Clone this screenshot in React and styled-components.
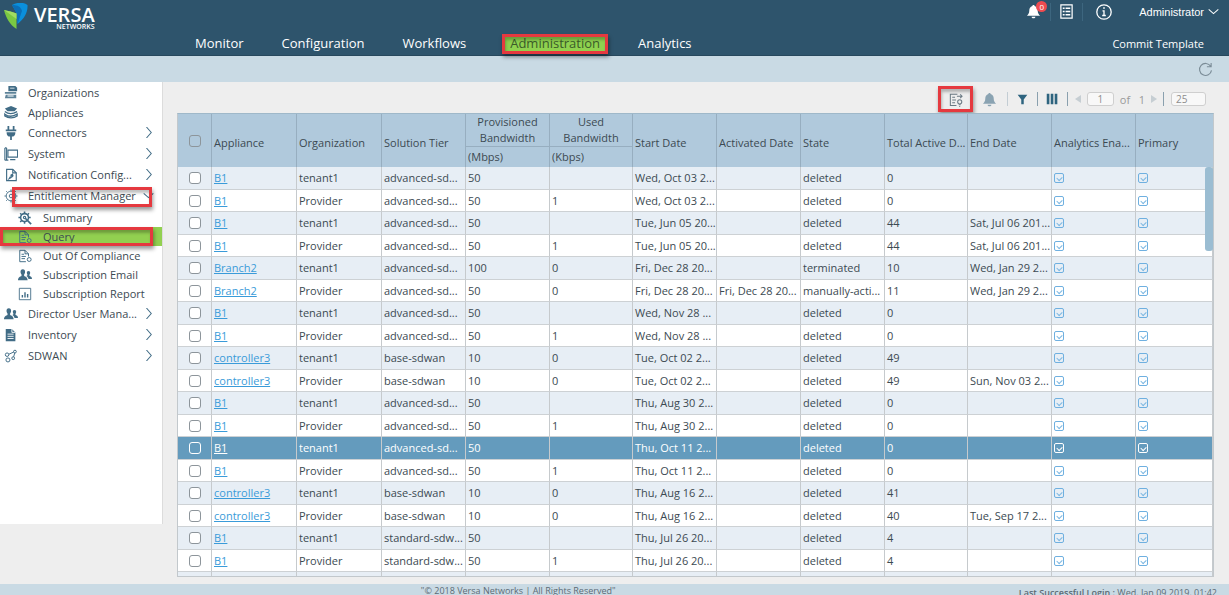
import React, { useState } from 'react'
import styled, { createGlobalStyle, css } from 'styled-components'

const GlobalStyle = createGlobalStyle`
  * {
    box-sizing: border-box;
  }
  body {
    margin: 0;
    font-family: 'Open Sans', 'Noto Sans', sans-serif;
    font-size: 11px;
    color: #3c4a52;
    background: #eeeeee;
  }
  button, input {
    font: inherit;
    color: inherit;
    margin: 0;
  }
  a {
    color: inherit;
    text-decoration: none;
  }
`

// red marker drawn round the parts the guide points at
const marker = css`
  position: relative;
  &::after {
    content: '';
    position: absolute;
    inset: ${(p) => p.$markInset || '0'};
    border: 3px solid #e5393f;
    box-shadow: 1px 3px 4px rgba(0, 0, 0, 0.4), inset 1px 3px 3px rgba(0, 0, 0, 0.25);
    pointer-events: none;
  }
`

const Page = styled.div`
  display: flex;
  flex-direction: column;
  height: 100vh;
  overflow: hidden;
`

const Header = styled.header`
  display: grid;
  grid-template-columns: 175px 1fr auto;
  height: 56px;
  flex: none;
  background: #2e546c;
  border-bottom: 1px solid #27485d;
  color: #ffffff;
`

const Logo = styled.a`
  display: flex;
  align-items: flex-start;
  gap: 6px;
  padding: 3px 0 0 4px;
`

const LogoText = styled.span`
  display: flex;
  flex-direction: column;
  align-items: flex-end;
  padding-top: 3px;
`

const LogoName = styled.span`
  font-size: 20px;
  line-height: 18px;
  font-weight: 600;
`

const LogoSub = styled.span`
  font-size: 7px;
  line-height: 6px;
  font-weight: 600;
`

const Nav = styled.nav`
  display: flex;
  align-items: flex-end;
  padding: 0 0 1px 1px;
`

const NavLink = styled.a`
  margin: 0 12px 2px;
  padding: 0 7px;
  font-size: 13px;
  line-height: 18px;
  ${(p) =>
    p.$active &&
    css`
      color: #3b5b2a;
      background: #8fd14f;
      border-radius: 4px;
      margin-left: 18px;
      ${marker}
    `}
`

const HeaderRight = styled.div`
  display: flex;
  flex-direction: column;
  justify-content: space-between;
  align-items: flex-end;
  padding: 0 10px 1px 0;
`

const HeaderIcons = styled.div`
  display: flex;
  align-items: center;
  height: 23px;
`

const HeaderButton = styled.button`
  position: relative;
  display: flex;
  align-items: center;
  justify-content: center;
  width: ${(p) => p.$width || '32px'};
  height: 18px;
  padding: 0;
  border: 0;
  border-right: ${(p) => (p.$divider ? '1px solid #3d667f' : '0')};
  background: none;
`

const Badge = styled.span`
  position: absolute;
  top: -2px;
  right: 3px;
  width: 11px;
  height: 11px;
  border-radius: 50%;
  background: #ee4b50;
  font-size: 8px;
  line-height: 11px;
  text-align: center;
`

const UserButton = styled.button`
  display: flex;
  align-items: center;
  gap: 4px;
  padding: 0 0 0 14px;
  border: 0;
  background: none;
  font-family: 'Liberation Sans', Arial, sans-serif;
  font-size: 11px;
`

const Commit = styled.a`
  padding: 0 15px 0 0;
  font-size: 11px;
  line-height: 20px;
`

const SubBar = styled.div`
  display: flex;
  align-items: center;
  justify-content: flex-end;
  flex: none;
  height: 26px;
  padding-right: 16px;
  background: #c9dae4;
  color: #7b8c97;
`

const IconButton = styled.button`
  display: flex;
  align-items: center;
  justify-content: center;
  width: ${(p) => p.$width || '29px'};
  height: 20px;
  padding: 0;
  border: 0;
  background: none;
  color: ${(p) => p.$color || 'inherit'};
  ${(p) => p.$marked && marker}
`

const Body = styled.div`
  display: flex;
  flex: 1;
  min-height: 0;
`

const Sidebar = styled.nav`
  width: 163px;
  flex: none;
  margin-bottom: 60px;
  background: #ffffff;
  border-right: 1px solid #dcdcdc;
`

const List = styled.ul`
  list-style: none;
  margin: 0;
  padding: ${(p) => (p.$sub ? '2px 0 0' : '0')};
`

const SideLink = styled.a`
  display: grid;
  grid-template-columns: ${(p) => (p.$sub ? '25px 1fr' : '24px 1fr 11px')};
  align-items: center;
  height: ${(p) => (p.$sub ? '19px' : p.$branch ? '21px' : '20px')};
  padding: 0 8px 0 ${(p) => (p.$sub ? '18px' : '4px')};
  font-size: 11px;
  white-space: nowrap;
  background: ${(p) => (p.$active ? '#92d050' : 'none')};
  ${(p) => p.$markInset && marker}
  svg {
    color: #416c86;
  }
`

const Main = styled.main`
  display: flex;
  flex-direction: column;
  flex: 1;
  min-width: 0;
  padding: 0 15px 7px 14px;
`

const Toolbar = styled.div`
  display: flex;
  align-items: center;
  justify-content: flex-end;
  flex: none;
  height: 31px;
  padding: 3px 2px 0 0;
  color: #9a9a9a;
`

const Divider = styled.span`
  width: 1px;
  height: 14px;
  background: ${(p) => (p.$dark ? '#8aa0ae' : '#c3cdd4')};
`

const Pager = styled.div`
  display: flex;
  align-items: center;
  gap: 6px;
  padding: 0 6px 0 7px;
`

const PagerButton = styled.button`
  display: flex;
  padding: 0;
  border: 0;
  background: none;
  color: #c6ced3;
`

const SmallInput = styled.input`
  width: ${(p) => p.$width};
  height: 14px;
  padding: 0 4px;
  border: 1px solid #cfcfcf;
  border-radius: 3px;
  background: #f8f8f8;
  font-size: 10px;
  color: #8d8d8d;
  text-align: ${(p) => p.$align || 'left'};
`

const TableWrap = styled.div`
  position: relative;
  flex: 1;
  min-height: 0;
  overflow: hidden;
  border: 1px solid #c2c8cc;
  border-top-color: #9fb8c9;
`

const Table = styled.table`
  width: 100%;
  table-layout: fixed;
  border-collapse: separate;
  border-spacing: 0;
`

const Th = styled.th`
  height: ${(p) => p.$height || '53px'};
  padding: ${(p) => (p.$center ? '0' : '4px 0 0 2px')};
  overflow: hidden;
  white-space: nowrap;
  font-weight: 400;
  line-height: 16px;
  text-align: ${(p) => (p.$center ? 'center' : 'left')};
  background: #b0c9dc;
  border-right: 1px solid #97aec0;
  border-bottom: ${(p) => (p.$line ? '1px solid #97aec0' : '0')};
  &:last-child {
    border-right-color: #b0c9dc;
  }
`

const UnitTh = styled(Th)`
  padding: 0 0 0 2px;
  &:last-child {
    border-right-color: #97aec0;
  }
`

const Td = styled.td`
  padding: ${(p) => (p.$center ? '0' : '0 0 0 2px')};
  overflow: hidden;
  white-space: nowrap;
  line-height: 16px;
  text-align: ${(p) => (p.$center ? 'center' : 'left')};
  border-right: 1px solid #c6cacd;
  border-bottom: 1px solid #cdd1d4;
`

const Row = styled.tr`
  height: 22px;
  background: #ffffff;
  &:nth-child(odd) {
    height: 23px;
    background: #e7eef5;
  }
  &&:nth-child(n) {
    ${(p) => p.$selected && 'background: #649bbd; color: #ffffff;'}
  }
`

const RowLink = styled.a`
  color: ${(p) => (p.$selected ? '#ffffff' : '#3a9bd9')};
  text-decoration: underline;
`

const Check = styled.input`
  appearance: none;
  display: block;
  width: 12px;
  height: 12px;
  margin: 0 auto;
  border: 1px solid ${(p) => (p.$light ? '#ffffff' : '#8d959b')};
  border-radius: 3px;
  background: ${(p) => (p.$light || p.$clear ? 'transparent' : '#ffffff')};
  &:checked {
    background: #649bbd;
  }
`

const Flag = styled.input`
  appearance: none;
  display: block;
  width: 10px;
  height: 10px;
  border: 1px solid ${(p) => (p.$light ? '#ffffff' : '#6fb0e0')};
  border-radius: 2px;
  &::before {
    content: '';
    display: block;
    width: 4px;
    height: 3px;
    margin: 2px 0 0 2px;
    border: solid ${(p) => (p.$light ? '#ffffff' : '#7db8e2')};
    border-width: 0 0 1px 1px;
    transform: rotate(-45deg);
  }
`

const ScrollThumb = styled.div`
  position: absolute;
  top: 53px;
  right: 0;
  width: 8px;
  height: 84px;
  border-radius: 3px;
  background: #9bbdd2;
`

const Footer = styled.footer`
  display: flex;
  justify-content: space-between;
  flex: none;
  height: 11px;
  padding: 0 12px 0 34%;
  overflow: hidden;
  background: #c9dae4;
  font-size: 9px;
  line-height: 13px;
  color: #5c6b75;
`

const Copyright = styled.span`
  padding-left: 3px;
`

const LastLogin = styled.span`
  padding-top: 2px;
  b {
    font-weight: 600;
  }
`

const Svg = ({ size = 14, box = 16, children, ...rest }) => (
  <svg
    width={size}
    height={size}
    viewBox={`0 0 ${box} ${box}`}
    fill="none"
    stroke="currentColor"
    strokeWidth="1.3"
    aria-hidden="true"
    {...rest}
  >
    {children}
  </svg>
)

const solid = { fill: 'currentColor', stroke: 'none' }

const icons = {
  organizations: (
    <g {...solid}>
      <path d="M5 1h8l2 2v4H5z" />
      <path d="M1 8h13v2H1zM2 11h12v4H1z" opacity="0.85" />
      <path d="M7 3h5v1H7zM4 12h7v1H4z" fill="#fff" />
    </g>
  ),
  appliances: (
    <g>
      <path d="M1 4l7-3 7 3-3 3H4z" {...solid} />
      <path d="M1 7.500c4 3 9 3 14 0M1 10.500c4 3 9 3 14 0v2c-4 3-10 3-14 0z" strokeWidth="1.600" />
    </g>
  ),
  connectors: (
    <g {...solid}>
      <path d="M4 0h2v4H4zM10 0h2v4h-2zM2 4h12v2H2zM3 7h10c0 4-2 5-4 5v4H7v-4c-2 0-4-1-4-5z" />
    </g>
  ),
  system: (
    <g>
      <path d="M4.500 3.500h11v8h-11z" />
      <path d="M1 1v14M3 1v14M1 1h2M1 15h4M7 14.500h6" />
    </g>
  ),
  notification: (
    <g>
      <path d="M3 1.500h7l4 4v9H3z" />
      <path d="M4 14l3-5 2 2zM7 8l3-2 1 3-2 2z" {...solid} />
      <path d="M10 1.500v4h4" />
    </g>
  ),
  gear: (
    <g strokeWidth="1">
      <circle cx="8" cy="8" r="5.500" />
      <circle cx="8" cy="8" r="2" />
      <path d="M8 .5v2M8 13.500v2M.5 8h2M13.500 8h2M2.500 2.500l1.500 1.500M12 12l1.500 1.500M2.500 13.500l1.500-1.500M12 4l1.500-1.500" />
    </g>
  ),
  summary: (
    <g>
      <circle cx="7.500" cy="7.500" r="4.500" strokeWidth="1.800" />
      <path d="M7.500 .5v2.500M.5 7.500H3M2.500 2.500l2 2M2.500 12.500l2-2M10.500 4.500l2-2M7.500 14.500v-2.500M12 7.500h2.500" strokeWidth="1.800" />
      <path d="M8 8l7 7" strokeWidth="2" />
      <circle cx="7.500" cy="7.500" r="1.300" />
    </g>
  ),
  query: (
    <g strokeWidth="1.100">
      <path d="M9 14.500H2v-13h6l4 4v3M8 1.500v4h4M4 6h3M4 8.500h5M4 11h4" />
      <circle cx="12.800" cy="12" r="2.200" />
    </g>
  ),
  users: (
    <g {...solid}>
      <path d="M5.500 1.500c1.900 0 2.700 1.400 2.600 3.200C8 6.200 7.400 7 7 7.500V9c1.500.8 4 1.200 4 5H0c0-3.800 2.500-4.200 4-5V7.500C3.600 7 3 6.200 2.900 4.700 2.800 2.900 3.600 1.500 5.500 1.500z" />
      <path d="M12 3.500c1.400 0 2 1 1.900 2.300-.1 1.100-.5 1.700-.8 2v1c1 .6 2.900.9 2.900 3.700h-4c-.3-1.700-1.200-2.800-2.500-3.500 1-.2 1.400-.6 1.400-1.200-.3-.3-.7-.9-.8-2C10 4.500 10.600 3.500 12 3.500z" />
    </g>
  ),
  report: (
    <g>
      <path d="M1.500 1.500h13v13h-13z" strokeWidth="1" />
      <path d="M5 12V9M8 12V6M11 12V8" strokeWidth="1.600" />
    </g>
  ),
  inventory: (
    <g>
      <path d="M2 1h7l4 4v10H2z" {...solid} />
      <path d="M4 7h7M4 9.500h7M4 12h7" stroke="#fff" strokeWidth="1" />
      <path d="M9 1v4h4" stroke="#fff" strokeWidth="1" />
    </g>
  ),
  sdwan: (
    <g strokeWidth="1.100">
      <circle cx="3.500" cy="6.500" r="2" />
      <circle cx="4.500" cy="12.500" r="2.300" />
      <circle cx="10.500" cy="10.500" r="1.600" />
      <circle cx="12.500" cy="3" r="1.600" />
      <path d="M5.500 6l5.500-2.500M11 9l1.300-4.500" />
    </g>
  ),
  bell: (
    <path
      d="M8 1c.8 0 1.200.5 1.200 1.200C11.500 2.800 12.500 5 12.500 7c0 3 1 4 2.500 5.500H1C2.500 11 3.500 10 3.500 7c0-2 1-4.200 3.300-4.800C6.800 1.500 7.200 1 8 1zM6 13.500h4c0 1-.9 1.800-2 1.800s-2-.8-2-1.800z"
      {...solid}
    />
  ),
  tasks: (
    <g>
      <path d="M2 1h12v14H2z" />
      <path d="M4 4.500h2M7 4.500h5M4 8h2M7 8h5M4 11.500h2M7 11.500h5" strokeWidth="1.500" />
    </g>
  ),
  info: (
    <g>
      <circle cx="8" cy="8" r="7.200" />
      <path d="M6.500 6.800H8V11.500M6.200 11.500h3.600" />
      <path d="M7.200 4h1.600" strokeWidth="1.600" />
    </g>
  ),
  export: (
    <g strokeWidth="1.100">
      <path d="M9 14.500H2.500v-12H10M4.500 5.500h3M4.500 8.500h4M4.500 11.500h3" />
      <path d="M9.500 4.500h5M13 2.500l2 2-2 2" />
      <circle cx="12.500" cy="10.500" r="2.200" />
      <path d="M11.500 13.500h2M12 15.500h1" />
    </g>
  ),
  filter: <path d="M1 1h14L9.800 8v7H6.200V8z" {...solid} />,
  columns: <path d="M1 1h3.500v14H1zM6.300 1h3.500v14H6.300zM11.600 1h3.500v14h-3.500z" {...solid} />,
  refresh: <path d="M13.500 4.500A6.400 6.400 0 1 0 14.400 9M14 1v4h-4.500" strokeWidth="1.200" />,
  right: <path d="M5 0l7 8-7 8" strokeWidth="1.500" />,
  down: <path d="M1 5l7 6 7-6" strokeWidth="1.500" />,
}

const menu = [
  { label: 'Organizations', icon: 'organizations' },
  { label: 'Appliances', icon: 'appliances' },
  { label: 'Connectors', icon: 'connectors', branch: true },
  { label: 'System', icon: 'system', branch: true },
  { label: 'Notification Config...', icon: 'notification', branch: true },
  {
    label: 'Entitlement Manager',
    icon: 'gear',
    branch: true,
    mark: '2px 10px -1px 12px',
    children: [
      { label: 'Summary', icon: 'summary' },
      { label: 'Query', icon: 'query', active: true, mark: '0 9px 0 0' },
      { label: 'Out Of Compliance', icon: 'query' },
      { label: 'Subscription Email', icon: 'users' },
      { label: 'Subscription Report', icon: 'report' },
    ],
  },
  { label: 'Director User Mana...', icon: 'users', branch: true },
  { label: 'Inventory', icon: 'inventory', branch: true },
  { label: 'SDWAN', icon: 'sdwan', branch: true },
]

const navItems = ['Monitor', 'Configuration', 'Workflows', 'Administration', 'Analytics']

const adv = 'advanced-sd...'
const base = 'base-sdwan'
const std = 'standard-sdw...'

// appliance, organization, tier, provisioned, used, start, activated, state, active days, end
const rows = [
  ['B1', 'tenant1', adv, '50', '', 'Wed, Oct 03 2...', '', 'deleted', '0', ''],
  ['B1', 'Provider', adv, '50', '1', 'Wed, Oct 03 2...', '', 'deleted', '0', ''],
  ['B1', 'tenant1', adv, '50', '', 'Tue, Jun 05 20...', '', 'deleted', '44', 'Sat, Jul 06 201...'],
  ['B1', 'Provider', adv, '50', '1', 'Tue, Jun 05 20...', '', 'deleted', '44', 'Sat, Jul 06 201...'],
  ['Branch2', 'tenant1', adv, '100', '0', 'Fri, Dec 28 20...', '', 'terminated', '10', 'Wed, Jan 29 2...'],
  ['Branch2', 'Provider', adv, '50', '0', 'Fri, Dec 28 20...', 'Fri, Dec 28 20...', 'manually-acti...', '11', 'Wed, Jan 29 2...'],
  ['B1', 'tenant1', adv, '50', '', 'Wed, Nov 28 ...', '', 'deleted', '0', ''],
  ['B1', 'Provider', adv, '50', '1', 'Wed, Nov 28 ...', '', 'deleted', '0', ''],
  ['controller3', 'tenant1', base, '10', '0', 'Tue, Oct 02 2...', '', 'deleted', '49', ''],
  ['controller3', 'Provider', base, '10', '0', 'Tue, Oct 02 2...', '', 'deleted', '49', 'Sun, Nov 03 2...'],
  ['B1', 'tenant1', adv, '50', '', 'Thu, Aug 30 2...', '', 'deleted', '0', ''],
  ['B1', 'Provider', adv, '50', '1', 'Thu, Aug 30 2...', '', 'deleted', '0', ''],
  ['B1', 'tenant1', adv, '50', '', 'Thu, Oct 11 2...', '', 'deleted', '0', ''],
  ['B1', 'Provider', adv, '50', '1', 'Thu, Oct 11 2...', '', 'deleted', '0', ''],
  ['controller3', 'tenant1', base, '10', '0', 'Thu, Aug 16 2...', '', 'deleted', '41', ''],
  ['controller3', 'Provider', base, '10', '0', 'Thu, Aug 16 2...', '', 'deleted', '40', 'Tue, Sep 17 2...'],
  ['B1', 'tenant1', std, '50', '', 'Thu, Jul 26 20...', '', 'deleted', '4', ''],
  ['B1', 'Provider', std, '50', '1', 'Thu, Jul 26 20...', '', 'deleted', '4', ''],
]

const Column = styled.col`
  width: ${(p) => p.$width};
`

const columnWidths = ['34px', '85px', '85px', '84px', '84px', '83px', '84px', '84px', '84px', '83px', '84px', '84px', 'auto']

function SideItem({ item, sub }) {
  return (
    <li>
      <SideLink
        href="#"
        $sub={sub}
        $branch={item.branch}
        $active={item.active}
        $markInset={item.mark}
      >
        <Svg size={14}>{icons[item.icon]}</Svg>
        <span>{item.label}</span>
        {item.branch && <Svg size={11}>{item.children ? icons.down : icons.right}</Svg>}
      </SideLink>
      {item.children && (
        <List $sub>
          {item.children.map((child) => (
            <SideItem key={child.label} item={child} sub />
          ))}
        </List>
      )}
    </li>
  )
}

function TopBar() {
  return (
    <Header>
      <Logo href="#" aria-label="Versa Networks">
        <svg width="24" height="27" viewBox="0 0 24 27" aria-hidden="true">
          <path d="M8 2c5-3 12-3 15.500 0 .5 7-3 14-10 19l-1-11z" fill="#0a8fdc" />
          <path d="M8 2c6 0 9 2 10 6l-4.500 13-1-11z" fill="#0b6fb8" />
          <path d="M0 7c4 1 9 2 12.500 3.500V26C6 22 2 15 0 7z" fill="#7ac943" />
          <path d="M0 7c4 1 9 2 12.500 3.500V16z" fill="#a0dc62" />
        </svg>
        <LogoText>
          <LogoName>VERSA</LogoName>
          <LogoSub>NETWORKS</LogoSub>
        </LogoText>
      </Logo>
      <Nav>
        {navItems.map((name) => (
          <NavLink key={name} href="#" $active={name === 'Administration'} $markInset="0 -1px -2px -1px">
            {name}
          </NavLink>
        ))}
      </Nav>
      <HeaderRight>
        <HeaderIcons>
          <HeaderButton $divider $width="35px" aria-label="Notifications">
            <Svg size={15}>{icons.bell}</Svg>
            <Badge>0</Badge>
          </HeaderButton>
          <HeaderButton $divider aria-label="Tasks">
            <Svg size={15}>{icons.tasks}</Svg>
          </HeaderButton>
          <HeaderButton $width="42px" aria-label="Information">
            <Svg size={16}>{icons.info}</Svg>
          </HeaderButton>
          <UserButton>
            Administrator
            <Svg size={11}>{icons.down}</Svg>
          </UserButton>
        </HeaderIcons>
        <Commit href="#">Commit Template</Commit>
      </HeaderRight>
    </Header>
  )
}

function EntitlementTable() {
  const [selected, setSelected] = useState(12)

  return (
    <TableWrap>
      <Table>
        <colgroup>
          {columnWidths.map((width, index) => (
            <Column key={index} $width={width} />
          ))}
        </colgroup>
        <thead>
          <tr>
            <Th rowSpan={2} $center>
              <Check type="checkbox" $clear aria-label="Select all" />
            </Th>
            <Th rowSpan={2}>Appliance</Th>
            <Th rowSpan={2}>Organization</Th>
            <Th rowSpan={2}>Solution Tier</Th>
            <Th $center $line $height="33px">Provisioned<br />Bandwidth</Th>
            <Th $center $line $height="33px">Used<br />Bandwidth</Th>
            <Th rowSpan={2}>Start Date</Th>
            <Th rowSpan={2}>Activated Date</Th>
            <Th rowSpan={2}>State</Th>
            <Th rowSpan={2}>Total Active D...</Th>
            <Th rowSpan={2}>End Date</Th>
            <Th rowSpan={2}>Analytics Ena...</Th>
            <Th rowSpan={2}>Primary</Th>
          </tr>
          <tr>
            <UnitTh $height="20px">(Mbps)</UnitTh>
            <UnitTh $height="20px">(Kbps)</UnitTh>
          </tr>
        </thead>
        <tbody>
          {rows.map((row, index) => {
            const light = index === selected
            return (
              <Row key={index} $selected={light} onClick={() => setSelected(index)}>
                <Td $center>
                  <Check type="checkbox" $light={light} aria-label={`Select row ${index + 1}`} />
                </Td>
                {row.map((cell, i) => (
                  <Td key={i}>{i === 0 ? <RowLink href="#" $selected={light}>{cell}</RowLink> : cell}</Td>
                ))}
                <Td>
                  <Flag type="checkbox" checked readOnly $light={light} aria-label="Analytics enabled" />
                </Td>
                <Td>
                  <Flag type="checkbox" checked readOnly $light={light} aria-label="Primary" />
                </Td>
              </Row>
            )
          })}
          {/* next row, only its top edge is in view */}
          <Row>
            {columnWidths.map((width, index) => (
              <Td key={index} />
            ))}
          </Row>
        </tbody>
      </Table>
      <ScrollThumb />
    </TableWrap>
  )
}

export default function App() {
  return (
    <Page>
      <GlobalStyle />
      <TopBar />
      <SubBar>
        <IconButton $width="16px" aria-label="Refresh">
          <Svg size={15}>{icons.refresh}</Svg>
        </IconButton>
      </SubBar>
      <Body>
        <Sidebar>
          <List>
            {menu.map((item) => (
              <SideItem key={item.label} item={item} />
            ))}
          </List>
        </Sidebar>
        <Main>
          <Toolbar>
            <IconButton $width="35px" $color="#6b7a84" $marked $markInset="-3px 0" aria-label="Export">
              <Svg size={15}>{icons.export}</Svg>
            </IconButton>
            <IconButton $width="34px" $color="#8aa3b2" aria-label="Alarms">
              <Svg size={15}>{icons.bell}</Svg>
            </IconButton>
            <Divider />
            <IconButton $color="#2e647f" aria-label="Filter">
              <Svg size={11}>{icons.filter}</Svg>
            </IconButton>
            <Divider $dark />
            <IconButton $color="#2e647f" aria-label="Columns">
              <Svg size={12}>{icons.columns}</Svg>
            </IconButton>
            <Divider $dark />
            <Pager>
              <PagerButton aria-label="Previous page">
                <svg width="6" height="8" viewBox="0 0 6 8" aria-hidden="true">
                  <path d="M6 0v8L0 4z" fill="currentColor" />
                </svg>
              </PagerButton>
              <SmallInput $width="27px" $align="center" defaultValue="1" aria-label="Page" />
              <span>of &nbsp; 1</span>
              <PagerButton aria-label="Next page">
                <svg width="6" height="8" viewBox="0 0 6 8" aria-hidden="true">
                  <path d="M0 0v8l6-4z" fill="currentColor" />
                </svg>
              </PagerButton>
            </Pager>
            <Divider $dark />
            <Pager>
              <SmallInput $width="35px" defaultValue="25" aria-label="Rows per page" />
            </Pager>
          </Toolbar>
          <EntitlementTable />
        </Main>
      </Body>
      <Footer>
        <Copyright>"© 2018 Versa Networks | All Rights Reserved"</Copyright>
        <LastLogin>
          <b>Last Successful Login :</b> Wed, Jan 09 2019, 01:42
        </LastLogin>
      </Footer>
    </Page>
  )
}
